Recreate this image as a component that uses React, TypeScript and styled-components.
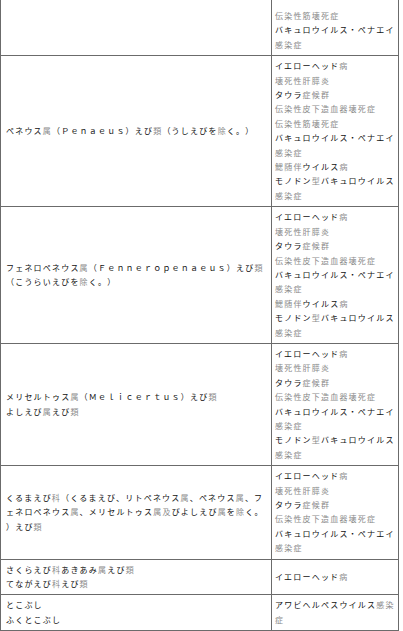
import React from "react";
import styled, { createGlobalStyle } from "styled-components";

type HostRow = {
  hosts: string[];
  diseases: string[];
};

const rows: HostRow[] = [
  {
    hosts: [],
    diseases: ["伝染性筋壊死症", "バキュロウイルス・ペナエイ感染症"],
  },
  {
    hosts: ["ペネウス属（Ｐｅｎａｅｕｓ）えび類（うしえびを除く。）"],
    diseases: [
      "イエローヘッド病",
      "壊死性肝膵炎",
      "タウラ症候群",
      "伝染性皮下造血器壊死症",
      "伝染性筋壊死症",
      "バキュロウイルス・ペナエイ感染症",
      "鰓随伴ウイルス病",
      "モノドン型バキュロウイルス感染症",
    ],
  },
  {
    hosts: ["フェネロペネウス属（Ｆｅｎｎｅｒｏｐｅｎａｅｕｓ）えび類（こうらいえびを除く。）"],
    diseases: [
      "イエローヘッド病",
      "壊死性肝膵炎",
      "タウラ症候群",
      "伝染性皮下造血器壊死症",
      "バキュロウイルス・ペナエイ感染症",
      "鰓随伴ウイルス病",
      "モノドン型バキュロウイルス感染症",
    ],
  },
  {
    hosts: ["メリセルトゥス属（Ｍｅｌｉｃｅｒｔｕｓ）えび類", "よしえび属えび類"],
    diseases: [
      "イエローヘッド病",
      "壊死性肝膵炎",
      "タウラ症候群",
      "伝染性皮下造血器壊死症",
      "バキュロウイルス・ペナエイ感染症",
      "モノドン型バキュロウイルス感染症",
    ],
  },
  {
    hosts: [
      "くるまえび科（くるまえび、リトペネウス属、ペネウス属、フェネロペネウス属、メリセルトゥス属及びよしえび属を除く。）えび類",
    ],
    diseases: [
      "イエローヘッド病",
      "壊死性肝膵炎",
      "タウラ症候群",
      "伝染性皮下造血器壊死症",
      "バキュロウイルス・ペナエイ感染症",
    ],
  },
  {
    hosts: ["さくらえび科あきあみ属えび類", "てながえび科えび類"],
    diseases: ["イエローヘッド病"],
  },
  {
    hosts: ["とこぶし", "ふくとこぶし"],
    diseases: ["アワビヘルペスウイルス感染症"],
  },
];

// kanji render lighter than kana at this size in the screenshot
const Tinted: React.FC<{ text: string }> = ({ text }) => (
  <>
    {text.split(/([\u3400-\u9fff]+)/).map((part, i) =>
      /[\u3400-\u9fff]/.test(part) ? <Kanji key={i}>{part}</Kanji> : part
    )}
  </>
);

const App: React.FC = () => {
  return (
    <>
      <GlobalStyle />
      <Table>
        <tbody>
          {rows.map((row, i) => (
            <Row key={i}>
              <HostCell $first={i === 0}>
                {row.hosts.map((h) => (
                  <Line key={h}>
                    <Tinted text={h} />
                  </Line>
                ))}
              </HostCell>
              <DiseaseCell $first={i === 0}>
                {row.diseases.map((d) => (
                  <Line key={d}>
                    <Tinted text={d} />
                  </Line>
                ))}
              </DiseaseCell>
            </Row>
          ))}
        </tbody>
      </Table>
    </>
  );
};

export default App;

const GlobalStyle = createGlobalStyle`
  body {
    margin: 0;
    background: #fff;
    font-family: "Noto Sans CJK JP", "Noto Sans", sans-serif;
  }
`;

const Table = styled.table`
  width: 399px;
  table-layout: fixed;
  border-collapse: separate;
  border-spacing: 0;
  font-size: 8px;
  letter-spacing: 1.2px;
  line-height: 14.4px;
  color: #111;
`;

const Row = styled.tr``;

const Cell = styled.td<{ $first?: boolean }>`
  box-sizing: border-box;
  vertical-align: middle;
  border-bottom: 1px solid #6b6b6b;
  border-right: 1px solid #6b6b6b;
  padding: ${(p) => (p.$first ? "9px" : "3px")} 1px 3px 3px;
  line-break: anywhere;
  text-spacing-trim: space-all;
`;

const HostCell = styled(Cell)`
  width: 272px;
  border-left: 1px solid #6b6b6b;
  padding-left: 5px;
  padding-right: 4px;
`;

const DiseaseCell = styled(Cell)`
  width: 127px;
`;

const Line = styled.div``;

const Kanji = styled.span`
  color: #8a8a8a;
`;
